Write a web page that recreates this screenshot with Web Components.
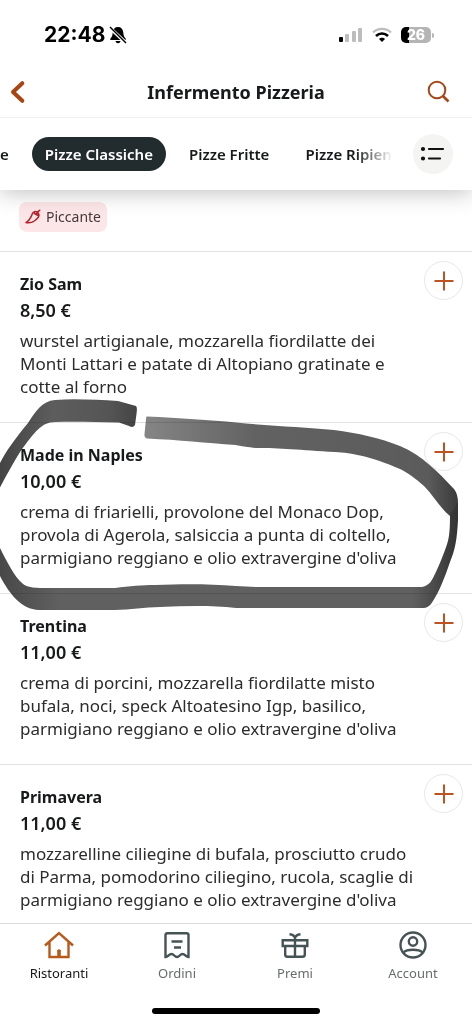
<!DOCTYPE html>
<html lang="it">
<head>
<meta charset="utf-8">
<meta name="viewport" content="width=device-width, initial-scale=1">
<title>Infermento Pizzeria</title>
<style>
  html, body { margin: 0; background: #fff; }
  body { font-family: "Noto Sans", "Open Sans", sans-serif; color: #17191a; }
</style>
</head>
<body>
<menu-page></menu-page>
<script>
const define = (name, html, setup) => {
  const tpl = document.createElement('template');
  tpl.innerHTML = html;
  customElements.define(name, class extends HTMLElement {
    constructor() {
      super();
      this.attachShadow({ mode: 'open' }).append(tpl.content.cloneNode(true));
    }
    connectedCallback() { if (setup) setup(this, this.shadowRoot); }
  });
};

define('status-bar', `
<style>
  :host { display: flex; align-items: center; justify-content: space-between; height: 66px; padding: 4px 38px 0 44px; box-sizing: border-box; color: #000; }
  .side { display: flex; align-items: center; gap: 4px; }
  .right { gap: 9px; }
  time { font: 700 21px/24px Inter, sans-serif; }
  svg { display: block; }
  .battery { display: flex; align-items: center; gap: 1px; }
  .level { width: 30px; height: 16px; border-radius: 5px; background: linear-gradient(90deg, #000 26%, #b5b5b5 26%); color: #fff; font: 800 14px/16px Inter, sans-serif; text-align: center; }
  .tip { width: 2px; height: 5px; border-radius: 0 2px 2px 0; background: #b5b5b5; }
</style>
<div class="side">
  <time>22:48</time>
  <svg width="18" height="18" viewBox="0 0 18 18" aria-label="Silenzioso">
    <path d="M9 1C6 1 4 3 3.700 6.500C3.500 9.500 3 10.500 1.400 12.500C1 13.300 1.300 14 2 14H16C16.800 14 17 13.300 16.600 12.500C15 10.500 14.500 9.500 14.300 6.500C14 3 12 1 9 1ZM6.500 15H11.500C11 18 7 18 6.500 15Z" fill="#000"/>
    <path d="M0 1L17 17" stroke="#fff" stroke-width="3.400"/><path d="M1 1L17 17" stroke="#000" stroke-width="1.400"/>
  </svg>
</div>
<div class="side right">
  <svg width="24" height="16" viewBox="0 0 24 16" aria-label="Segnale">
    <rect x="0" y="10" width="4" height="5" rx="1" fill="#000"/><rect x="6" y="7" width="4" height="8" rx="1" fill="#bdbdbd"/><rect x="13" y="4" width="4" height="11" rx="1" fill="#bdbdbd"/><rect x="19" y="1" width="4" height="14" rx="1" fill="#bdbdbd"/>
  </svg>
  <svg width="20" height="16" viewBox="0 0 20 16" fill="none" aria-label="Wi-Fi">
    <path d="M1 5.500C6 .6 14 .6 19 5.500" stroke="#bdbdbd" stroke-width="2.400"/><path d="M4 9C7.500 5.700 12.500 5.700 16 9" stroke="#000" stroke-width="2.600"/><path d="M7 12C8.500 10.300 11.500 10.300 13 12L10 15Z" fill="#000"/>
  </svg>
  <div class="battery"><div class="level">26</div><div class="tip"></div></div>
</div>`);

define('title-bar', `
<style>
  :host { display: grid; grid-template-columns: 40px 1fr 40px; align-items: center; height: 52px; box-sizing: border-box; border-bottom: 1px solid #f0f0f0; padding: 0 8px; }
  h1 { margin: 0; font-size: 18px; line-height: 24px; font-weight: 700; text-align: center; }
  button { border: 0; background: none; padding: 0; height: 40px; display: flex; align-items: center; }
  .search { justify-content: flex-end; padding-right: 14px; }
</style>
<button aria-label="Indietro"><svg width="20" height="24" viewBox="0 0 20 24" fill="none"><path d="M14.300 3.200L5 12L14.300 20.800" stroke="#a84511" stroke-width="4" stroke-linecap="round" stroke-linejoin="round"/></svg></button>
<h1>Infermento Pizzeria</h1>
<button class="search" aria-label="Cerca"><svg width="24" height="24" viewBox="0 0 24 24" fill="none" stroke="#a4481c" stroke-width="2"><circle cx="11" cy="10" r="8.300"/><path d="M16.600 15.800L22.500 21.500" stroke-width="2.600"/></svg></button>`);

define('category-tabs', `
<style>
  :host { display: flex; align-items: center; justify-content: space-between; height: 72px; padding-right: 19px; background: #fff; box-shadow: 0 2px 22px rgba(0,0,0,.26); clip-path: inset(0 0 -40px 0); position: relative; z-index: 1; }
  nav { flex: 1; min-width: 0; display: flex; gap: 10px; overflow: hidden; margin-right: 20px; -webkit-mask-image: linear-gradient(90deg, #000 calc(100% - 38px), transparent); mask-image: linear-gradient(90deg, #000 calc(100% - 38px), transparent); }
  button { border: 0; background: none; color: #17191a; font: 600 15px/20px "Noto Sans", sans-serif; white-space: nowrap; flex: none; border-radius: 17px; padding: 7px 13px; }
  .past { padding-left: 0; }
  .on { background: #222b2d; color: #fff; }
  .all { width: 40px; height: 40px; border-radius: 50%; background: #f4f4f3; padding: 0; display: grid; place-items: center; }
</style>
<nav aria-label="Categorie">
  <button class="past">e</button><button class="on" aria-current="true">Pizze Classiche</button><button>Pizze Fritte</button><button>Pizze Ripien</button>
</nav>
<button class="all" aria-label="Tutte le categorie"><svg width="26" height="16" viewBox="0 0 26 16" stroke="#111" stroke-width="2.200" stroke-linecap="round"><circle cx="3" cy="3" r="1.300" fill="#111" stroke-width="1.600"/><circle cx="3" cy="12.500" r="1.300" fill="#111" stroke-width="1.600"/><path d="M9 3H23M9 12.500H20"/></svg></button>`);

define('spicy-tag', `
<style>
  :host { display: inline-flex; align-items: center; gap: 5px; height: 30px; padding: 0 6px; border-radius: 8px; background: #fde6e7; color: #45393b; font-size: 14px; line-height: 20px; }
  svg { display: block; }
</style>
<svg width="16" height="16" viewBox="0 0 16 16" fill="none" stroke="#b3202b" stroke-width="1.500" stroke-linecap="round" stroke-linejoin="round"><path d="M12.300 3.400C10.700 1.900 8.400 2.600 7.500 4.300C6.500 7 5.500 10.500 1 13.600C5.500 14.500 10.500 12.200 13.300 8.300C14.300 6.500 14 4.600 12.300 3.400ZM12.300 3.400L14.700 1.200M9 3.500L10.300 5.200L11.800 4.500L12.100 6.300L14 6.500"/></svg>
<slot></slot>`);

define('dish-row', `
<style>
  :host { display: flex; justify-content: space-between; align-items: flex-start; border-top: 1px solid #e2e2e2; padding: 19px 9px 24px 20px; }
  .text { flex: 0 1 auto; }
  h2, .price { margin: 0; font-size: 16px; line-height: 26px; font-weight: 700; }
  .price { font-size: 18px; font-weight: 600; }
  .desc { margin: 6px 0 0; font-size: 17px; line-height: 23px; font-weight: 400; color: #2c2c2c; white-space: pre-line; }
  button { flex: none; width: 39px; height: 39px; margin-top: -10px; border: 1px solid #e8e8e8; border-radius: 50%; background: #fff; padding: 0; display: grid; place-items: center; }
</style>
<div class="text"><h2><slot name="name"></slot></h2><p class="price"><slot name="price"></slot></p><p class="desc"><slot></slot></p></div>
<button><svg width="20" height="20" viewBox="0 0 20 20" stroke="#bd5222" stroke-width="2"><path d="M10 .5V19.500M.5 10H19.500"/></svg></button>`,
(host, root) => root.querySelector('button').setAttribute('aria-label', 'Aggiungi ' + host.querySelector('[slot=name]').textContent));

define('pen-mark', `
<style>
  :host { position: absolute; left: 0; top: 0; pointer-events: none; mix-blend-mode: multiply; }
  svg { display: block; }
</style>
<svg width="472" height="220" viewBox="0 395 472 220">
  <defs>
    <linearGradient id="a" x1="0" x2="1"><stop offset="0" stop-color="#444"/><stop offset=".4" stop-color="#5d5d5d"/><stop offset=".8" stop-color="#555"/><stop offset="1" stop-color="#444"/></linearGradient>
    <linearGradient id="b" gradientUnits="userSpaceOnUse" x1="145" y1="0" x2="460" y2="0"><stop offset="0" stop-color="#858585"/><stop offset=".35" stop-color="#626262"/><stop offset=".9" stop-color="#5b5b5b"/><stop offset="1" stop-color="#383838"/></linearGradient>
    <linearGradient id="c" gradientUnits="userSpaceOnUse" x1="0" y1="0" x2="458" y2="0"><stop offset="0" stop-color="#484848"/><stop offset=".13" stop-color="#606060"/><stop offset=".9" stop-color="#606060"/><stop offset="1" stop-color="#333"/></linearGradient>
  </defs>
  <path fill="url(#a)" d="M-2 467C4 454 14 440 28 423C35 412 42 401 55 400C75 398.500 98 400 118 401L136 406Q137.500 407 136.500 414L135 425Q133 428.500 129 426L119 422.500C96 422 75 421.500 55 422C41 422 34 434 25 445C16 457 8 473 -2 491Z"/>
  <path fill="url(#b)" d="M147 416.500C180 418 210 420 236 422.500C270 426 305 427 334 430C358 433 380 438 400 446C422 455 439 473 454 489Q458 494 458 503V520L450 516C440 508 434 496 424 486C415 478 408 473 400 469C370 456 352 453 335 452C300 450 280 448 256 448C248 447 240 446 236 445C205 443 180 440 147 438.500Q144 438 144.500 434L146 419Q146 416 147 416.500Z"/>
  <path fill="url(#c)" d="M-2 544C6 560 14 576 22 583C27 588 36 588 50 588H115C130 586 142 585 155 585C185 584 210 584 236 586L256 587H422Q429 586 433 578C439 566 442 558 445 550C449 540 450 534 450 514L458 503V520C457 540 455 550 450 562C445 577 439 592 433 601Q429 608 424 608H236C210 605 185 606 160 607C145 607 130 610 115 610H39C20 609 8 592 -2 572Z"/>
</svg>`);

define('bottom-nav', `
<style>
  :host { display: block; border-top: 1px solid #dcdcdc; background: #fff; }
  nav { display: grid; grid-template-columns: repeat(4, 1fr); padding-top: 6px; }
  a { display: flex; flex-direction: column; align-items: center; gap: 3px; color: #686c6d; text-decoration: none; font-size: 13px; line-height: 20px; }
  a[aria-current] { color: #17191a; }
  svg { display: block; fill: none; stroke: #465355; stroke-width: 2.400; }
  .home { width: 168px; height: 6px; border-radius: 3px; background: #000; margin: 25px auto 10px; }
</style>
<nav>
  <a href="#ristoranti" aria-current="page"><svg width="30" height="30" viewBox="0 0 30 30" style="stroke:#b85a1b"><path d="M1 15.500L15 3L29 15.500M5.500 12V27H24.500V12"/><path d="M15 20V27" stroke-width="3.600"/><path d="M13.200 21Q15 18 16.800 21" stroke-width="1"/></svg>Ristoranti</a>
  <a href="#ordini"><svg width="30" height="30" viewBox="0 0 30 30"><path d="M3.500 27V5Q3.500 3.200 5.500 3.200H24.500Q26.500 3.200 26.500 5V27C24 27 23 24 20.500 24C18 24 17.500 27 15 27C12.500 27 12 24 9.500 24C7 24 6 27 3.500 27ZM9.500 11.500H20.500M12 17.500H19"/></svg>Ordini</a>
  <a href="#premi"><svg width="30" height="30" viewBox="0 0 30 30"><path d="M2.700 10.200H27.300V16H2.700ZM5.200 16V24.500Q5.200 26.800 7.500 26.800H22.500Q24.800 26.800 24.800 24.500V16M15 7V27M15 8C14.500 5.500 12 4.500 9.500 4.200M15 8C15.500 5.500 18 4.500 20.500 4.200"/></svg>Premi</a>
  <a href="#account"><svg width="30" height="30" viewBox="0 0 30 30"><circle cx="15" cy="15" r="12.500"/><circle cx="15" cy="11.500" r="4.200"/><path d="M5.500 22.500C9 18.800 21 18.800 24.500 22.500"/></svg>Account</a>
</nav>
<div class="home"></div>`);

define('menu-page', `
<style>
  :host { display: flex; flex-direction: column; height: 100vh; overflow: hidden; background: #fff; }
  status-bar, title-bar, category-tabs, bottom-nav { flex: none; }
  main { flex: 1; min-height: 0; overflow: hidden; }
  .tags { padding: 12px 19px 19px; display: flex; }
  .marked { position: relative; }
  pen-mark { top: -27px; }
</style>
<status-bar></status-bar>
<title-bar></title-bar>
<category-tabs></category-tabs>
<main>
  <div class="tags"><spicy-tag>Piccante</spicy-tag></div>
  <dish-row><span slot="name">Zio Sam</span><span slot="price">8,50 €</span>wurstel artigianale, mozzarella fiordilatte dei
Monti Lattari e patate di Altopiano gratinate e
cotte al forno</dish-row>
  <div class="marked">
    <dish-row><span slot="name">Made in Naples</span><span slot="price">10,00 €</span>crema di friarielli, provolone del Monaco Dop,
provola di Agerola, salsiccia a punta di coltello,
parmigiano reggiano e olio extravergine d'oliva</dish-row>
    <pen-mark></pen-mark>
  </div>
  <dish-row><span slot="name">Trentina</span><span slot="price">11,00 €</span>crema di porcini, mozzarella fiordilatte misto
bufala, noci, speck Altoatesino Igp, basilico,
parmigiano reggiano e olio extravergine d'oliva</dish-row>
  <dish-row><span slot="name">Primavera</span><span slot="price">11,00 €</span>mozzarelline ciliegine di bufala, prosciutto crudo
di Parma, pomodorino ciliegino, rucola, scaglie di
parmigiano reggiano e olio extravergine d'oliva</dish-row>
</main>
<bottom-nav></bottom-nav>`);
</script>
</body>
</html>
